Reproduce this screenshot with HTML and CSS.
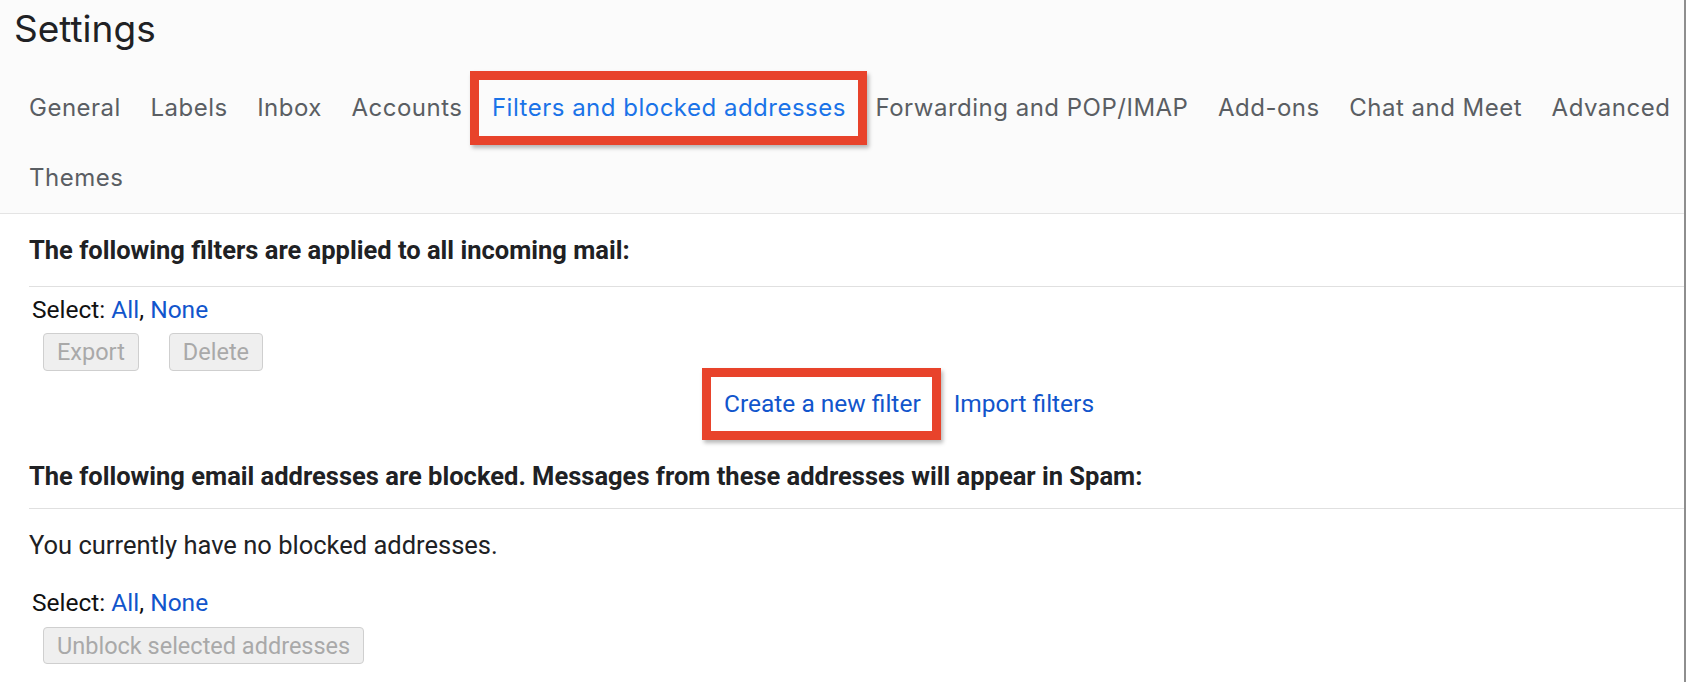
FILE: index.html
```html
<!DOCTYPE html>
<html lang="en">
<head>
<meta charset="utf-8">
<title>Settings</title>
<link rel="stylesheet" href="styles.css">
</head>
<body>
<div class="page">
  <header class="head">
    <h1 class="title">Settings</h1>
    <nav class="tabs">
      <a class="tab">General</a>
      <a class="tab">Labels</a>
      <a class="tab">Inbox</a>
      <a class="tab">Accounts</a>
      <a class="tab active">Filters and blocked addresses</a>
      <a class="tab">Forwarding and POP/IMAP</a>
      <a class="tab">Add-ons</a>
      <a class="tab">Chat and Meet</a>
      <a class="tab">Advanced</a>
      <a class="tab">Themes</a>
    </nav>
  </header>
  <main class="content">
    <div class="section-title">The following filters are applied to all incoming mail:</div>
    <div class="select">Select: <a class="link">All</a>, <a class="link">None</a></div>
    <div class="btns">
      <button class="btn" disabled>Export</button>
      <button class="btn" disabled>Delete</button>
    </div>
    <div class="filter-links">
      <a class="link big callout">Create a new filter</a>
      <a class="link big">Import filters</a>
    </div>
    <div class="section-title compact">The following email addresses are blocked. Messages from these addresses will appear in Spam:</div>
    <p class="empty">You currently have no blocked addresses.</p>
    <div class="select second">Select: <a class="link">All</a>, <a class="link">None</a></div>
    <div class="btns">
      <button class="btn wide" disabled>Unblock selected addresses</button>
    </div>
  </main>
</div>
</body>
</html>
```

FILE: styles.css
```css
html, body {
  margin: 0;
  padding: 0;
  background: #ffffff;
}

body {
  font-family: Roboto, "Liberation Sans", Arial, sans-serif;
  color: #202124;
}

.page {
  width: 1686px;
  min-height: 682px;
  box-sizing: border-box;
  border-right: 2px solid #8e8e8e;
}

.head {
  background: #fbfbfb;
  border-bottom: 1px solid #e4e4e4;
  padding-left: 14px;
}

.title {
  margin: 0 0 13px;
  font-family: Inter, Roboto, sans-serif;
  font-weight: 400;
  font-size: 37px;
  line-height: 58px;
  color: #202124;
}

.tabs {
  display: flex;
  flex-wrap: wrap;
  gap: 0 29.5px;
  padding: 2px 0 0 15px;
  margin-right: -10px;
}

.tab {
  position: relative;
  font-family: Inter, Roboto, sans-serif;
  font-size: 24px;
  line-height: 70px;
  color: #5a5e63;
  letter-spacing: 0.5px;
}

.tab.active {
  color: #1a73e8;
}

.tab.active::after,
.callout::after {
  content: "";
  position: absolute;
  border: 9px solid #e8432b;
  box-shadow: 2px 3px 4px rgba(0, 0, 0, 0.28);
  pointer-events: none;
}

.tab.active::after {
  left: -22px;
  right: -21px;
  top: -2px;
  bottom: -2px;
}

.content {
  padding-left: 29px;
}

.section-title {
  font-weight: 700;
  font-size: 25.5px;
  line-height: 72px;
  color: #202124;
  border-bottom: 1px solid #e0e0e0;
}

.section-title.compact {
  line-height: 64px;
}

.select {
  margin-top: 8px;
  padding-left: 3px;
  font-size: 24.5px;
  line-height: 29px;
  color: #111;
}

.link {
  color: #1155cc;
  text-decoration: none;
}

.btns {
  display: flex;
  gap: 30px;
  margin-top: 9px;
  padding-left: 14px;
}

.btn {
  height: 38px;
  padding: 0 13px;
  font-family: Roboto, "Liberation Sans", Arial, sans-serif;
  font-size: 23.5px;
  color: #a9a9a9;
  background: #efefef;
  border: 1.5px solid #cfcfcf;
  border-radius: 4px;
}

.btn.wide {
  height: 37px;
}

.filter-links {
  display: flex;
  gap: 33px;
  padding: 3px 0 10px 695px;
}

.big {
  font-size: 24.5px;
  line-height: 60px;
}

.callout {
  position: relative;
}

.callout::after {
  left: -22px;
  right: -20px;
  top: -6px;
  bottom: -6px;
}

.empty {
  margin: 22px 0 0;
  font-size: 25.5px;
  line-height: 29px;
  color: #202124;
}

.select.second {
  margin-top: 28px;
}

.second + .btns {
  margin-top: 10px;
}
```
